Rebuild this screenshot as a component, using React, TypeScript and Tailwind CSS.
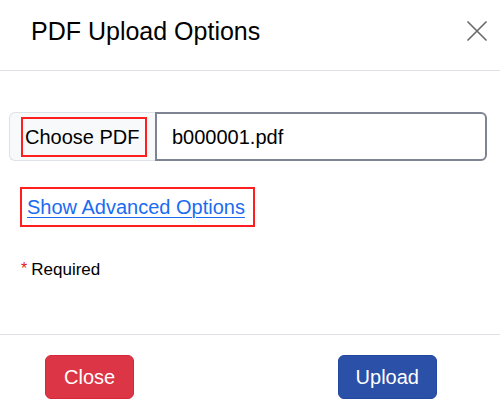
import { useState } from 'react'

export default function App() {
  const [fileName] = useState('b000001.pdf')

  return (
    <div className="w-[500px] h-[414px] bg-white font-['Liberation_Sans',Arial,sans-serif] text-black overflow-hidden">
      {/* Header */}
      <div className="h-[71px] pb-[9px] pl-[31px] pr-[13px] flex items-center justify-between border-b border-[#dee2e6]">
        <h1 className="text-[25px] leading-[30px] font-normal">PDF Upload Options</h1>
        <button className="w-[20px] h-[20px] flex items-center justify-center text-[#6b6b6b]" title="Close">
          <svg width="20" height="20" viewBox="0 0 20 20" fill="none" stroke="currentColor" strokeWidth={1.7} strokeLinecap="round">
            <path d="M1 1L19 19M19 1L1 19" />
          </svg>
        </button>
      </div>

      {/* Body */}
      <div className="h-[264px] pt-[41px] pl-[9px] pr-[13px] border-b border-[#dee2e6]">
        <div className="flex h-[49px]">
          <label className="flex items-center pl-[11px] pr-[8px] bg-[#f8f9fa] border border-r-0 border-[#dee2e6] rounded-l-[6px]">
            <span className="h-[40px] w-[126px] flex items-center pl-[2px] border-2 border-[#ff1f1f] text-[20px] leading-none">
              Choose PDF
            </span>
          </label>
          <div className="flex-1 flex items-center pl-[15px] border-2 border-[#7e8491] rounded-r-[6px] text-[20px]">
            {fileName}
          </div>
        </div>

        <div className="mt-[26px] ml-[11px]">
          <a
            href="#"
            className="inline-flex items-center h-[40px] pl-[5px] pr-[8px] border-2 border-[#ff1f1f] text-[20px] text-[#1a6bf0] underline decoration-1 underline-offset-[3px]"
          >
            Show Advanced Options
          </a>
        </div>

        <p className="mt-[33px] ml-[12px] flex items-start text-[17px] leading-[20px]">
          <span className="text-[#e02020] text-[16px] leading-none mt-[1px] mr-[4px]">*</span>
          <span>Required</span>
        </p>
      </div>

      {/* Footer */}
      <div className="flex items-start pt-[20px] pl-[45px] pr-[63px]">
        <button className="h-[44px] px-[18px] rounded-[6px] bg-[#dc3545] border border-[#d6283a] text-white text-[20px]">
          Close
        </button>
        <button className="ml-auto h-[44px] px-[17px] rounded-[6px] bg-[#2a50a8] border border-[#2447a0] text-white text-[20px]">
          Upload
        </button>
      </div>
    </div>
  )
}
